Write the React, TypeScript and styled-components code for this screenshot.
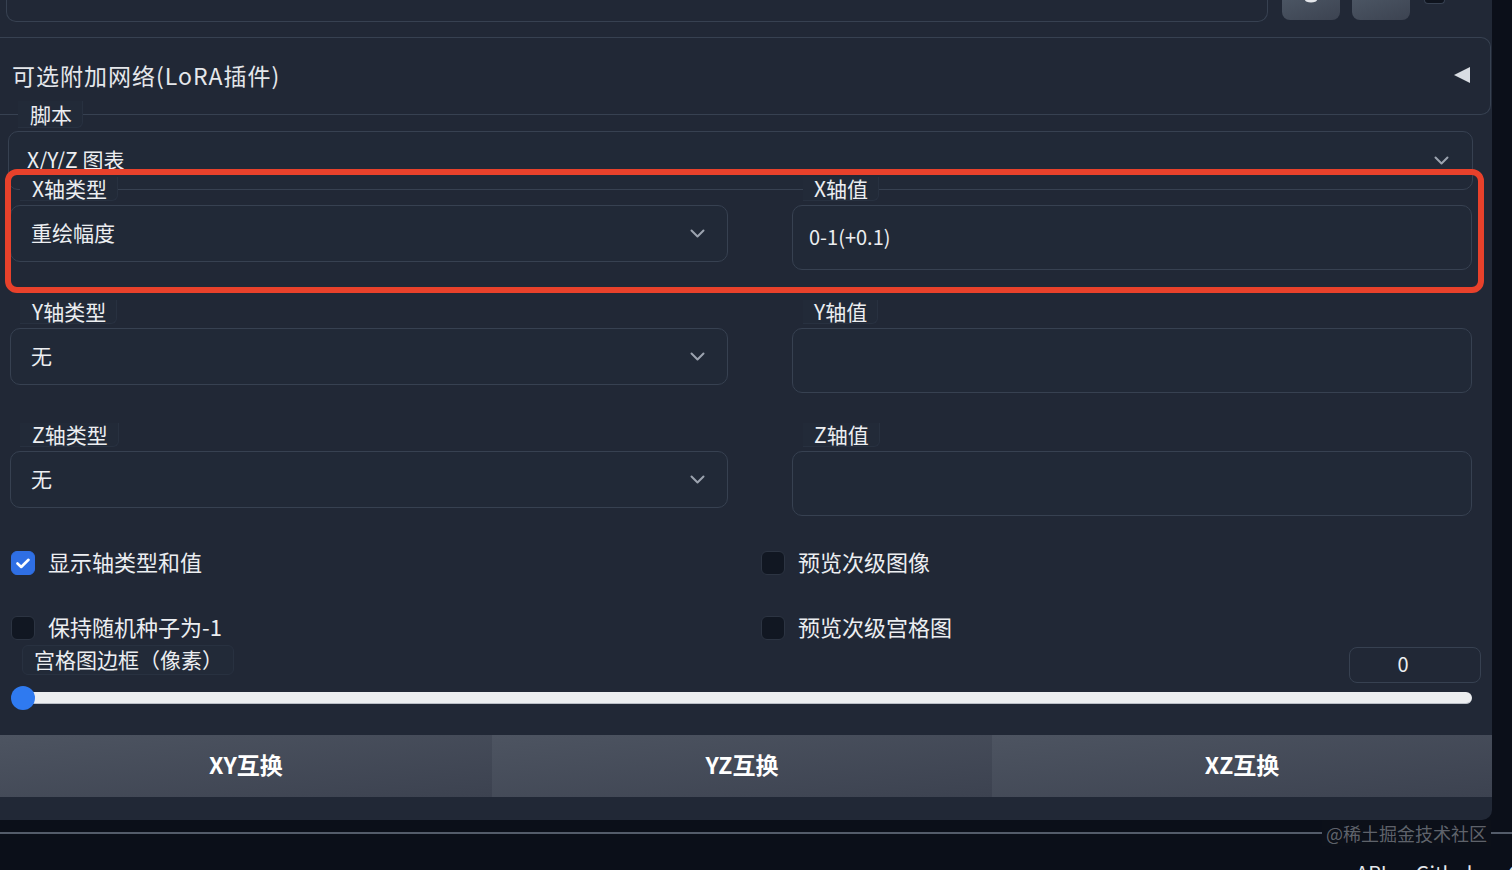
import React from 'react'
import styled, { createGlobalStyle } from 'styled-components'

const GlobalStyle = createGlobalStyle`
  html, body {
    margin: 0;
    padding: 0;
    background: #0b0f19;
  }
  body {
    font-family: 'Noto Sans CJK SC', 'Noto Sans', sans-serif;
    color: #e8eaed;
  }
  * {
    box-sizing: border-box;
  }
`

const Page = styled.div`
  position: relative;
  width: 1512px;
  height: 870px;
  overflow: hidden;
  background: #0b0f19;
`

const Panel = styled.div`
  width: 1492px;
  height: 820px;
  background: #212836;
  border-bottom-right-radius: 10px;
  display: flex;
  flex-direction: column;
`

// seed row, cut off at the top of the shot
const TopStrip = styled.div`
  display: flex;
  align-items: flex-start;
  height: 22px;
`

const SeedBox = styled.div`
  margin-left: 6px;
  width: 1262px;
  height: 22px;
  border: 1px solid #374151;
  border-top: none;
  border-radius: 0 0 10px 10px;
`

const ToolButton = styled.div<{ $gap: number }>`
  margin-left: ${({ $gap }) => $gap}px;
  width: 58px;
  height: 20px;
  border-radius: 0 0 8px 8px;
  background: linear-gradient(to bottom right, #4b5563, #3c4351);
  display: flex;
  justify-content: center;
  align-items: flex-start;
`

const ExtraBox = styled.div`
  margin-left: 14px;
  width: 21px;
  height: 4px;
  background: #0f141e;
  border: 1px solid #374151;
  border-top: none;
  border-radius: 0 0 4px 4px;
`

const Accordion = styled.div`
  margin-top: 15px;
  width: 1491px;
  height: 78px;
  border: 1px solid #374151;
  border-left: none;
  border-radius: 0 10px 10px 0;
  display: flex;
  align-items: center;
  justify-content: space-between;
  padding: 0 19px 2px 12px;
  font-size: 23px;
  letter-spacing: 1px;
  color: #e5e7eb;
`

const Field = styled.div`
  display: flex;
  flex-direction: column;
`

const FieldLabel = styled.span<{ $left: number; $pad?: number }>`
  align-self: flex-start;
  position: relative;
  z-index: 1;
  height: 24px;
  margin-left: ${({ $left }) => $left}px;
  padding: 0 10px 0 ${({ $pad }) => $pad ?? 12}px;
  display: inline-flex;
  align-items: center;
  background: #222a38;
  border: 1px solid #283140;
  border-top: none;
  border-left: none;
  border-radius: 0 0 6px 0;
  font-size: 21px;
  line-height: 1;
  color: #eceef1;
`

const ScriptLabel = styled(FieldLabel)`
  margin-top: -14px;
  height: 27px;
`

const SelectBox = styled.div<{ $h: number; $padL: number; $padR: number }>`
  height: ${({ $h }) => $h}px;
  border: 1px solid #374151;
  border-radius: 10px;
  background: #212937;
  display: flex;
  align-items: center;
  justify-content: space-between;
  padding: 0 ${({ $padR }) => $padR}px 0 ${({ $padL }) => $padL}px;
  font-size: 21px;
  color: #eceef1;
`

const BoxText = styled.span`
  padding-bottom: 4px;
`

const ScriptSelect = styled(SelectBox)`
  margin: 3px 0 0 8px;
  width: 1465px;
`

const AxisGrid = styled.div`
  display: grid;
  grid-template-columns: 718px 680px;
  column-gap: 64px;
  row-gap: 30px;
  margin: -13px 0 0 10px;
`

const AxisBox = styled(SelectBox)`
  margin-top: 4px;
`

const TextBox = styled.div`
  margin-top: 4px;
  height: 65px;
  border: 1px solid #374151;
  border-radius: 10px;
  background: #212937;
  display: flex;
  align-items: center;
  padding: 0 0 3px 16px;
  font-size: 20px;
  color: #eceef1;
`

const CheckGrid = styled.div`
  display: grid;
  grid-template-columns: 750px 740px;
  row-gap: 41px;
  margin: 35px 0 0 11px;
`

const CheckItem = styled.label`
  display: flex;
  align-items: center;
  gap: 13px;
  height: 24px;
  font-size: 22px;
  color: #eceef1;
`

const CheckText = styled.span`
  padding-bottom: 4px;
`

const CheckBox = styled.span<{ $on: boolean }>`
  width: 24px;
  height: 24px;
  border-radius: 6px;
  display: flex;
  align-items: center;
  justify-content: center;
  background: ${({ $on }) => ($on ? '#2f6fe4' : '#111722')};
  border: 1px solid ${({ $on }) => ($on ? '#2f6fe4' : '#2c3442')};
`

const SliderHeader = styled.div`
  display: flex;
  justify-content: space-between;
  align-items: flex-start;
  margin: 5px 11px 0 22px;
`

const SliderLabel = styled.span`
  height: 30px;
  padding: 0 10px 3px 11px;
  display: inline-flex;
  align-items: center;
  background: #222a38;
  border: 1px solid #283140;
  border-radius: 6px;
  font-size: 21px;
  color: #eceef1;
`

const NumberBox = styled.div`
  margin-top: 2px;
  width: 132px;
  height: 36px;
  border: 1px solid #374151;
  border-radius: 8px;
  display: flex;
  align-items: center;
  justify-content: center;
  padding: 0 24px 3px 0;
  font-size: 20px;
  color: #eceef1;
`

const SliderArea = styled.div`
  position: relative;
  margin: 3px 0 0 12px;
  width: 1460px;
  height: 24px;
  display: flex;
  align-items: center;
`

const Track = styled.div`
  width: 100%;
  height: 12px;
  border-radius: 6px;
  background: #eceef0;
  border-bottom: 1px solid #b9bec6;
`

const Thumb = styled.div`
  position: absolute;
  left: -1px;
  top: 0;
  width: 24px;
  height: 24px;
  border-radius: 50%;
  background: #2f7af0;
`

const SwapRow = styled.div`
  margin-top: 25px;
  display: flex;
  height: 62px;
`

const SwapButton = styled.div<{ $w: number }>`
  width: ${({ $w }) => $w}px;
  display: flex;
  align-items: center;
  justify-content: center;
  padding-bottom: 4px;
  background: linear-gradient(to bottom right, #4d5461, #3c4250);
  font-size: 23px;
  font-weight: 700;
  color: #ffffff;
`

const Bottom = styled.div`
  position: relative;
  height: 50px;
  display: flex;
  flex-direction: column;
`

const Divider = styled.div`
  flex-shrink: 0;
  margin-top: 12px;
  height: 2px;
  background: #545c6a;
`

const Watermark = styled.span`
  position: absolute;
  left: 1322px;
  top: 0;
  padding: 0 4px;
  background: #0c1019;
  font-size: 18px;
  color: rgba(200, 204, 212, 0.45);
`

const FooterLinks = styled.div`
  flex-shrink: 0;
  margin: 24px 0 0 1356px;
  font-size: 20px;
  white-space: nowrap;
  color: #e5e7eb;
`

const Highlight = styled.div`
  position: absolute;
  left: 5px;
  top: 169px;
  width: 1479px;
  height: 124px;
  border: 6px solid #e8412b;
  border-radius: 12px;
  pointer-events: none;
`

const Chevron = () => (
  <svg width='15' height='9' viewBox='0 0 15 9'>
    <polyline points='1.5,1.5 7.5,7.5 13.5,1.5' fill='none' stroke='#9ca3af' strokeWidth='2' strokeLinecap='round' strokeLinejoin='round' />
  </svg>
)

const Tick = () => (
  <svg width='14' height='11' viewBox='0 0 14 11'>
    <polyline points='1.5,5.5 5.2,9 12.5,1.8' fill='none' stroke='#ffffff' strokeWidth='2.6' strokeLinecap='round' strokeLinejoin='round' />
  </svg>
)

const Collapse = () => (
  <svg width='18' height='18' viewBox='0 0 18 18'>
    <polygon points='1,9 17,1 17,17' fill='#d9dde3' />
  </svg>
)

const axes = [
  { type: 'X轴类型', value: '重绘幅度', label: 'X轴值', text: '0-1(+0.1)' },
  { type: 'Y轴类型', value: '无', label: 'Y轴值', text: '' },
  { type: 'Z轴类型', value: '无', label: 'Z轴值', text: '' }
]

const checks = [
  { text: '显示轴类型和值', on: true },
  { text: '预览次级图像', on: false },
  { text: '保持随机种子为-1', on: false },
  { text: '预览次级宫格图', on: false }
]

const swaps = [
  { text: 'XY互换', w: 492 },
  { text: 'YZ互换', w: 500 },
  { text: 'XZ互换', w: 500 }
]

const App = () => {
  return (
    <Page>
      <GlobalStyle />
      <Panel>
        <TopStrip>
          <SeedBox />
          <ToolButton $gap={14}>
            <svg width='14' height='3' viewBox='0 0 14 3'>
              <ellipse cx='7' cy='0' rx='6' ry='2.5' fill='#e5e7eb' />
            </svg>
          </ToolButton>
          <ToolButton $gap={12} />
          <ExtraBox />
        </TopStrip>

        <Accordion>
          <span>可选附加网络(LoRA插件)</span>
          <Collapse />
        </Accordion>

        <Field>
          <ScriptLabel $left={18}>脚本</ScriptLabel>
          <ScriptSelect $h={59} $padL={18} $padR={23}>
            <BoxText>X/Y/Z 图表</BoxText>
            <Chevron />
          </ScriptSelect>
        </Field>

        <AxisGrid>
          {axes.map((a) => (
            <React.Fragment key={a.type}>
              <Field>
                <FieldLabel $left={10}>{a.type}</FieldLabel>
                <AxisBox $h={57} $padL={20} $padR={22}>
                  <BoxText>{a.value}</BoxText>
                  <Chevron />
                </AxisBox>
              </Field>
              <Field>
                <FieldLabel $left={11} $pad={11}>{a.label}</FieldLabel>
                <TextBox>{a.text}</TextBox>
              </Field>
            </React.Fragment>
          ))}
        </AxisGrid>

        <CheckGrid>
          {checks.map((c) => (
            <CheckItem key={c.text}>
              <CheckBox $on={c.on}>{c.on && <Tick />}</CheckBox>
              <CheckText>{c.text}</CheckText>
            </CheckItem>
          ))}
        </CheckGrid>

        <SliderHeader>
          <SliderLabel>宫格图边框（像素）</SliderLabel>
          <NumberBox>0</NumberBox>
        </SliderHeader>
        <SliderArea>
          <Track />
          <Thumb />
        </SliderArea>

        <SwapRow>
          {swaps.map((s) => (
            <SwapButton key={s.text} $w={s.w}>{s.text}</SwapButton>
          ))}
        </SwapRow>
      </Panel>

      <Bottom>
        <Divider />
        <Watermark>@稀土掘金技术社区</Watermark>
        <FooterLinks>API  •  Github  •  Gradio</FooterLinks>
      </Bottom>

      <Highlight />
    </Page>
  )
}

export default App
